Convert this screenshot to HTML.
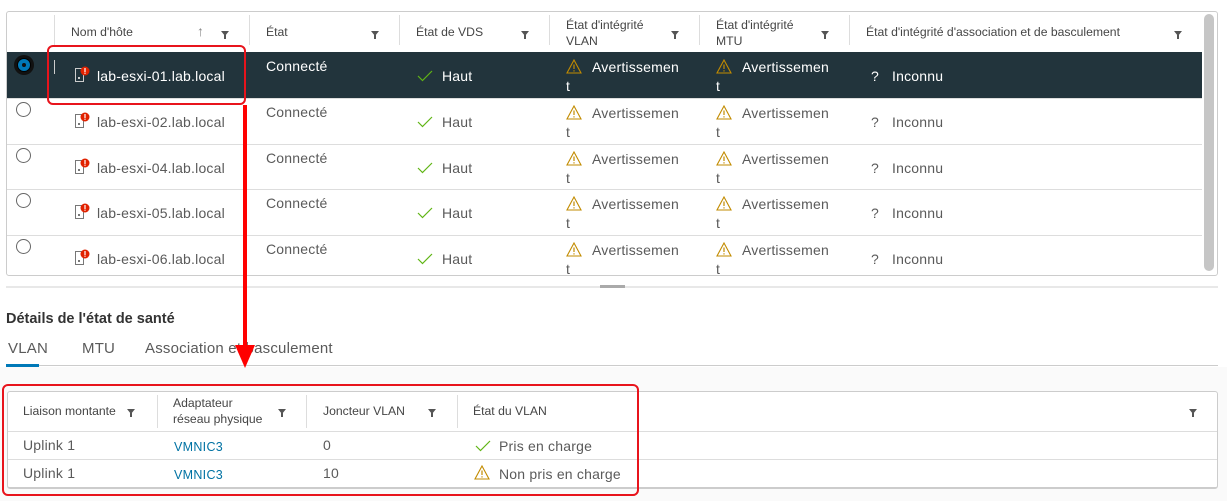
<!DOCTYPE html>
<html><head><meta charset="utf-8"><style>
*{margin:0;padding:0;box-sizing:border-box}
body{width:1227px;height:501px;background:#fff;font-family:"Liberation Sans",sans-serif;position:relative;overflow:hidden;color:#5a5a5a}
.a{position:absolute;white-space:nowrap}
.h{font-size:12.2px;color:#454545;line-height:16px}
.t{font-size:14px;line-height:18px;letter-spacing:0.2px}
.vl{position:absolute;width:1px;background:#ddd}
.hl{position:absolute;height:1px;background:#ddd}
.f{position:absolute;width:0;height:0;border-left:4px solid transparent;border-right:4px solid transparent;border-top:5px solid #555}
.f:after{content:"";position:absolute;left:-1px;top:-1px;width:2px;height:4px;background:#555}
.dk{color:#fff}
</style></head><body>
<div class="a" style="left:6px;top:11px;width:1212px;height:265px;border:1px solid #ccc;border-radius:3px"></div>
<div class="a" style="left:7px;top:52px;width:1195px;height:46px;background:#22343c"></div>
<div class="hl" style="left:7px;top:98px;width:1195px"></div>
<div class="hl" style="left:7px;top:144px;width:1195px"></div>
<div class="hl" style="left:7px;top:189px;width:1195px"></div>
<div class="hl" style="left:7px;top:235px;width:1195px"></div>
<div class="a" style="left:1204px;top:14px;width:10px;height:257px;background:#c6c6c6;border-radius:5px"></div>
<div class="vl" style="left:54px;top:15px;height:30px"></div>
<div class="vl" style="left:249px;top:15px;height:30px"></div>
<div class="vl" style="left:399px;top:15px;height:30px"></div>
<div class="vl" style="left:549px;top:15px;height:30px"></div>
<div class="vl" style="left:699px;top:15px;height:30px"></div>
<div class="vl" style="left:849px;top:15px;height:30px"></div>
<div class="a h" style="left:71px;top:24px">Nom d'hôte</div>
<div class="a h" style="left:197px;top:23px;font-size:14px;color:#888">↑</div>
<div class="f" style="left:221px;top:31px"></div>
<div class="a h" style="left:266px;top:24px">État</div><div class="f" style="left:371px;top:31px"></div>
<div class="a h" style="left:416px;top:24px">État de VDS</div><div class="f" style="left:521px;top:31px"></div>
<div class="a h" style="left:566px;top:17px">État d'intégrité<br>VLAN</div><div class="f" style="left:671px;top:31px"></div>
<div class="a h" style="left:716px;top:17px">État d'intégrité<br>MTU</div><div class="f" style="left:821px;top:31px"></div>
<div class="a h" style="left:866px;top:24px">État d'intégrité d'association et de basculement</div><div class="f" style="left:1174px;top:31px"></div>
<div class="a" style="left:54px;top:60px;width:1px;height:14px;background:#ccc"></div>

<div id="rows"></div>
<script>
var ys=[52,98,144,189,235],names=["01","02","04","05","06"],h="";
ys.forEach(function(y,i){var d=i==0,c=d?' dk':'';
h+=(d?'<div class="a" style="left:14px;top:'+(y+3)+'px;width:20px;height:20px;border-radius:50%;background:#111"></div><div class="a" style="left:17px;top:'+(y+6)+'px;width:14px;height:14px;border-radius:50%;background:#0079b8;border:1px solid #000"></div><div class="a" style="left:22px;top:'+(y+11)+'px;width:4px;height:4px;border-radius:50%;background:#111"></div>':'<div class="a" style="left:16px;top:'+(y+4)+'px;width:15px;height:15px;border-radius:50%;border:1px solid #666;background:#fff"></div>');
h+='<svg class="a" style="left:74px;top:'+(y+14)+'px" width="16" height="18" viewBox="0 0 16 18"><rect x="1.5" y="2.5" width="8" height="13" fill="none" stroke="'+(d?'#ccc':'#777')+'"/><rect x="4" y="11" width="2" height="2" fill="'+(d?'#ccc':'#777')+'"/><circle cx="11" cy="5" r="4.5" fill="#e12200"/><rect x="10.4" y="2" width="1.2" height="4" fill="#fff"/><rect x="10.4" y="6.6" width="1.2" height="1.2" fill="#fff"/></svg>';
h+='<div class="a t'+c+'" style="left:97px;top:'+(y+15)+'px">lab-esxi-'+names[i]+'.lab.local</div>';
h+='<div class="a t'+c+'" style="left:266px;top:'+(y+5)+'px">Connecté</div>';
h+='<svg class="a" style="left:417px;top:'+(y+18)+'px" width="16" height="12"><path d="M1 6l4.5 4.5L15 1" fill="none" stroke="#60b515" stroke-width="1.2"/></svg>';
h+='<div class="a t'+c+'" style="left:442px;top:'+(y+15)+'px">Haut</div>';
[566,716].forEach(function(x){
h+='<svg class="a" style="left:'+x+'px;top:'+(y+7)+'px" width="16" height="15"><path d="M8 1L15 14H1Z" fill="none" stroke="#c28b00" stroke-width="1.1"/><path d="M8 5.5v4.5M8 11.3v1.2" stroke="#c28b00" stroke-width="1.2"/></svg>';
h+='<div class="a t'+c+'" style="left:'+(x+26)+'px;top:'+(y+6)+'px">Avertissemen</div><div class="a t'+c+'" style="left:'+x+'px;top:'+(y+25)+'px">t</div>';});
h+='<div class="a t'+c+'" style="left:871px;top:'+(y+15)+'px">?</div><div class="a t'+c+'" style="left:892px;top:'+(y+15)+'px">Inconnu</div>';
});
document.getElementById('rows').innerHTML=h;
</script>
<div class="a" style="left:7px;top:276px;width:1211px;height:9px;background:#fff"></div>
<div class="a" style="left:6px;top:286px;width:1212px;height:2px;background:#e8e8e8"></div>
<div class="a" style="left:600px;top:285px;width:25px;height:3px;background:#aaa"></div>

<div class="a" style="left:6px;top:311px;font-size:14.5px;font-weight:bold;color:#333">Détails de l'état de santé</div>
<div class="a t" style="left:8px;top:340px;font-size:15px">VLAN</div>
<div class="a t" style="left:82px;top:340px;font-size:15px">MTU</div>
<div class="a t" style="left:145px;top:340px;font-size:15px">Association et basculement</div>
<div class="a" style="left:6px;top:365px;width:1212px;height:1px;background:#ccc"></div>
<div class="a" style="left:6px;top:364px;width:33px;height:3px;background:#0079b8"></div>
<div class="a" style="left:0;top:367px;width:1227px;height:134px;background:#fafafa"></div>

<div class="a" style="left:7px;top:391px;width:1211px;height:98px;border:1px solid #ccc;border-radius:3px;background:#fff;border-bottom:2px solid #ccc"></div>
<div class="hl" style="left:8px;top:431px;width:1209px"></div>
<div class="hl" style="left:8px;top:459px;width:1209px"></div>
<div class="vl" style="left:157px;top:395px;height:33px"></div>
<div class="vl" style="left:306px;top:395px;height:33px"></div>
<div class="vl" style="left:457px;top:395px;height:33px"></div>
<div class="a h" style="left:23px;top:403px">Liaison montante</div><div class="f" style="left:127px;top:409px"></div>
<div class="a h" style="left:173px;top:395px">Adaptateur<br>réseau physique</div><div class="f" style="left:278px;top:409px"></div>
<div class="a h" style="left:323px;top:403px">Joncteur VLAN</div><div class="f" style="left:428px;top:409px"></div>
<div class="a h" style="left:473px;top:403px">État du VLAN</div><div class="f" style="left:1189px;top:409px"></div>
<div class="a t" style="left:23px;top:436px">Uplink 1</div>
<div class="a" style="left:174px;top:440px;font-size:12.5px;color:#0072a3;letter-spacing:0.3px">VMNIC3</div>
<div class="a t" style="left:323px;top:436px">0</div>
<svg class="a" style="left:475px;top:440px" width="16" height="12"><path d="M1 6l4.5 4.5L15 1" fill="none" stroke="#60b515" stroke-width="1.2"/></svg>
<div class="a t" style="left:499px;top:437px">Pris en charge</div>
<div class="a t" style="left:23px;top:464px">Uplink 1</div>
<div class="a" style="left:174px;top:468px;font-size:12.5px;color:#0072a3;letter-spacing:0.3px">VMNIC3</div>
<div class="a t" style="left:323px;top:464px">10</div>
<svg class="a" style="left:474px;top:465px" width="16" height="15"><path d="M8 1L15 14H1Z" fill="none" stroke="#c28b00" stroke-width="1.1"/><path d="M8 5.5v4.5M8 11.3v1.2" stroke="#c28b00" stroke-width="1.2"/></svg>
<div class="a t" style="left:499px;top:465px">Non pris en charge</div>

<div class="a" style="left:47px;top:45px;width:199px;height:60px;border:2px solid #e8141c;border-radius:6px"></div>
<div class="a" style="left:243px;top:105px;width:4px;height:245px;background:#f00"></div>
<svg class="a" style="left:235px;top:345px" width="20" height="24"><path d="M0 0H20L10 23Z" fill="#f00"/></svg>
<div class="a" style="left:2px;top:384px;width:637px;height:112px;border:2px solid #e8141c;border-radius:6px"></div>
</body></html>
